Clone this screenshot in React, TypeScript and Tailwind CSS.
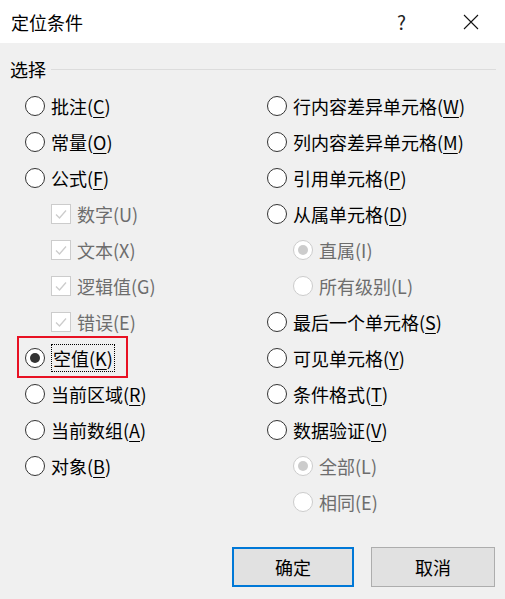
import React from 'react';

type Item = {
  label: string;
  key: string;
  kind: 'radio' | 'check' | 'sub';
  checked?: boolean;
  disabled?: boolean;
  focus?: boolean;
  marked?: boolean;
};

const leftItems: Item[] = [
  { label: '批注', key: 'C', kind: 'radio' },
  { label: '常量', key: 'O', kind: 'radio' },
  { label: '公式', key: 'F', kind: 'radio' },
  { label: '数字', key: 'U', kind: 'check', checked: true, disabled: true },
  { label: '文本', key: 'X', kind: 'check', checked: true, disabled: true },
  { label: '逻辑值', key: 'G', kind: 'check', checked: true, disabled: true },
  { label: '错误', key: 'E', kind: 'check', checked: true, disabled: true },
  { label: '空值', key: 'K', kind: 'radio', checked: true, focus: true, marked: true },
  { label: '当前区域', key: 'R', kind: 'radio' },
  { label: '当前数组', key: 'A', kind: 'radio' },
  { label: '对象', key: 'B', kind: 'radio' },
];

const rightItems: Item[] = [
  { label: '行内容差异单元格', key: 'W', kind: 'radio' },
  { label: '列内容差异单元格', key: 'M', kind: 'radio' },
  { label: '引用单元格', key: 'P', kind: 'radio' },
  { label: '从属单元格', key: 'D', kind: 'radio' },
  { label: '直属', key: 'I', kind: 'sub', checked: true, disabled: true },
  { label: '所有级别', key: 'L', kind: 'sub', disabled: true },
  { label: '最后一个单元格', key: 'S', kind: 'radio' },
  { label: '可见单元格', key: 'Y', kind: 'radio' },
  { label: '条件格式', key: 'T', kind: 'radio' },
  { label: '数据验证', key: 'V', kind: 'radio' },
  { label: '全部', key: 'L', kind: 'sub', checked: true, disabled: true },
  { label: '相同', key: 'E', kind: 'sub', disabled: true },
];

function Radio({ checked, disabled }: { checked?: boolean; disabled?: boolean }) {
  return (
    <span
      className={`flex h-5 w-5 shrink-0 items-center justify-center rounded-full border bg-white ${
        disabled ? 'border-[#cccccc]' : 'border-[#333333]'
      }`}
    >
      {checked && (
        <span
          className={`h-[10px] w-[10px] rounded-full ${disabled ? 'bg-[#cccccc]' : 'bg-[#333333]'}`}
        />
      )}
    </span>
  );
}

function Check({ checked }: { checked?: boolean }) {
  return (
    <span className="flex h-5 w-5 shrink-0 items-center justify-center border border-[#cccccc] bg-white">
      {checked && (
        <svg width="14" height="14" viewBox="0 0 14 14" fill="none">
          <path d="M2 7.5 L5.5 11 L12 3.5" stroke="#cccccc" strokeWidth="1.3" />
        </svg>
      )}
    </span>
  );
}

function Row({ item }: { item: Item }) {
  // disabled options show no access-key underline
  const text = (
    <span
      className={`leading-none ${item.disabled ? 'text-[#6d6d6d]' : 'text-black'} ${
        item.focus ? 'border border-dotted border-black px-[1px] py-[4px]' : ''
      }`}
    >
      {item.label}(
      {item.disabled ? item.key : <u className="underline-offset-[3px]">{item.key}</u>})
    </span>
  );
  const indent = item.kind === 'check' || item.kind === 'sub';
  return (
    <div className={`relative flex h-9 items-center gap-[6px] ${indent ? 'pl-[26px]' : ''}`}>
      {item.kind === 'check' ? (
        <Check checked={item.checked} />
      ) : (
        <Radio checked={item.checked} disabled={item.disabled} />
      )}
      {text}
      {item.marked && (
        <span className="absolute left-[-8px] top-[-4px] h-[42px] w-[111px] border-2 border-[#e81123]" />
      )}
    </div>
  );
}

export default function App() {
  return (
    <div
      className="flex h-[599px] w-[505px] flex-col bg-[#f0f0f0] text-[18px]"
      style={{ fontFamily: '"Microsoft YaHei", "Noto Sans CJK SC", "Noto Sans", sans-serif' }}
    >
      <div className="flex h-[43px] items-center bg-white pl-[11px]">
        <span className="leading-none">定位条件</span>
        <span className="ml-auto mr-[57px] text-[19px] leading-none text-[#222]">?</span>
        <svg width="16" height="16" viewBox="0 0 16 16" className="mr-[26px]">
          <path d="M1 1 L15 15 M15 1 L1 15" stroke="#111" strokeWidth="1.1" />
        </svg>
      </div>

      <div className="mt-[16px] flex h-5 items-center pl-[10px] pr-[9px]">
        <span className="leading-none">选择</span>
        <span className="ml-[5px] h-px flex-1 bg-[#dcdcdc]" />
      </div>

      <div className="mt-[9px] grid grid-cols-[242px_1fr] pl-[25px]">
        <div className="flex flex-col">
          {leftItems.map((it) => (
            <Row key={it.label} item={it} />
          ))}
        </div>
        <div className="flex flex-col">
          {rightItems.map((it) => (
            <Row key={it.label} item={it} />
          ))}
        </div>
      </div>

      <div className="mt-[27px] flex gap-[17px] pl-[232px]">
        <button className="flex h-10 w-[122px] items-center justify-center border-2 border-[#0078d7] bg-[#e1e1e1] leading-none">
          确定
        </button>
        <button className="flex h-10 w-[124px] items-center justify-center border border-[#adadad] bg-[#e1e1e1] leading-none">
          取消
        </button>
      </div>
    </div>
  );
}
